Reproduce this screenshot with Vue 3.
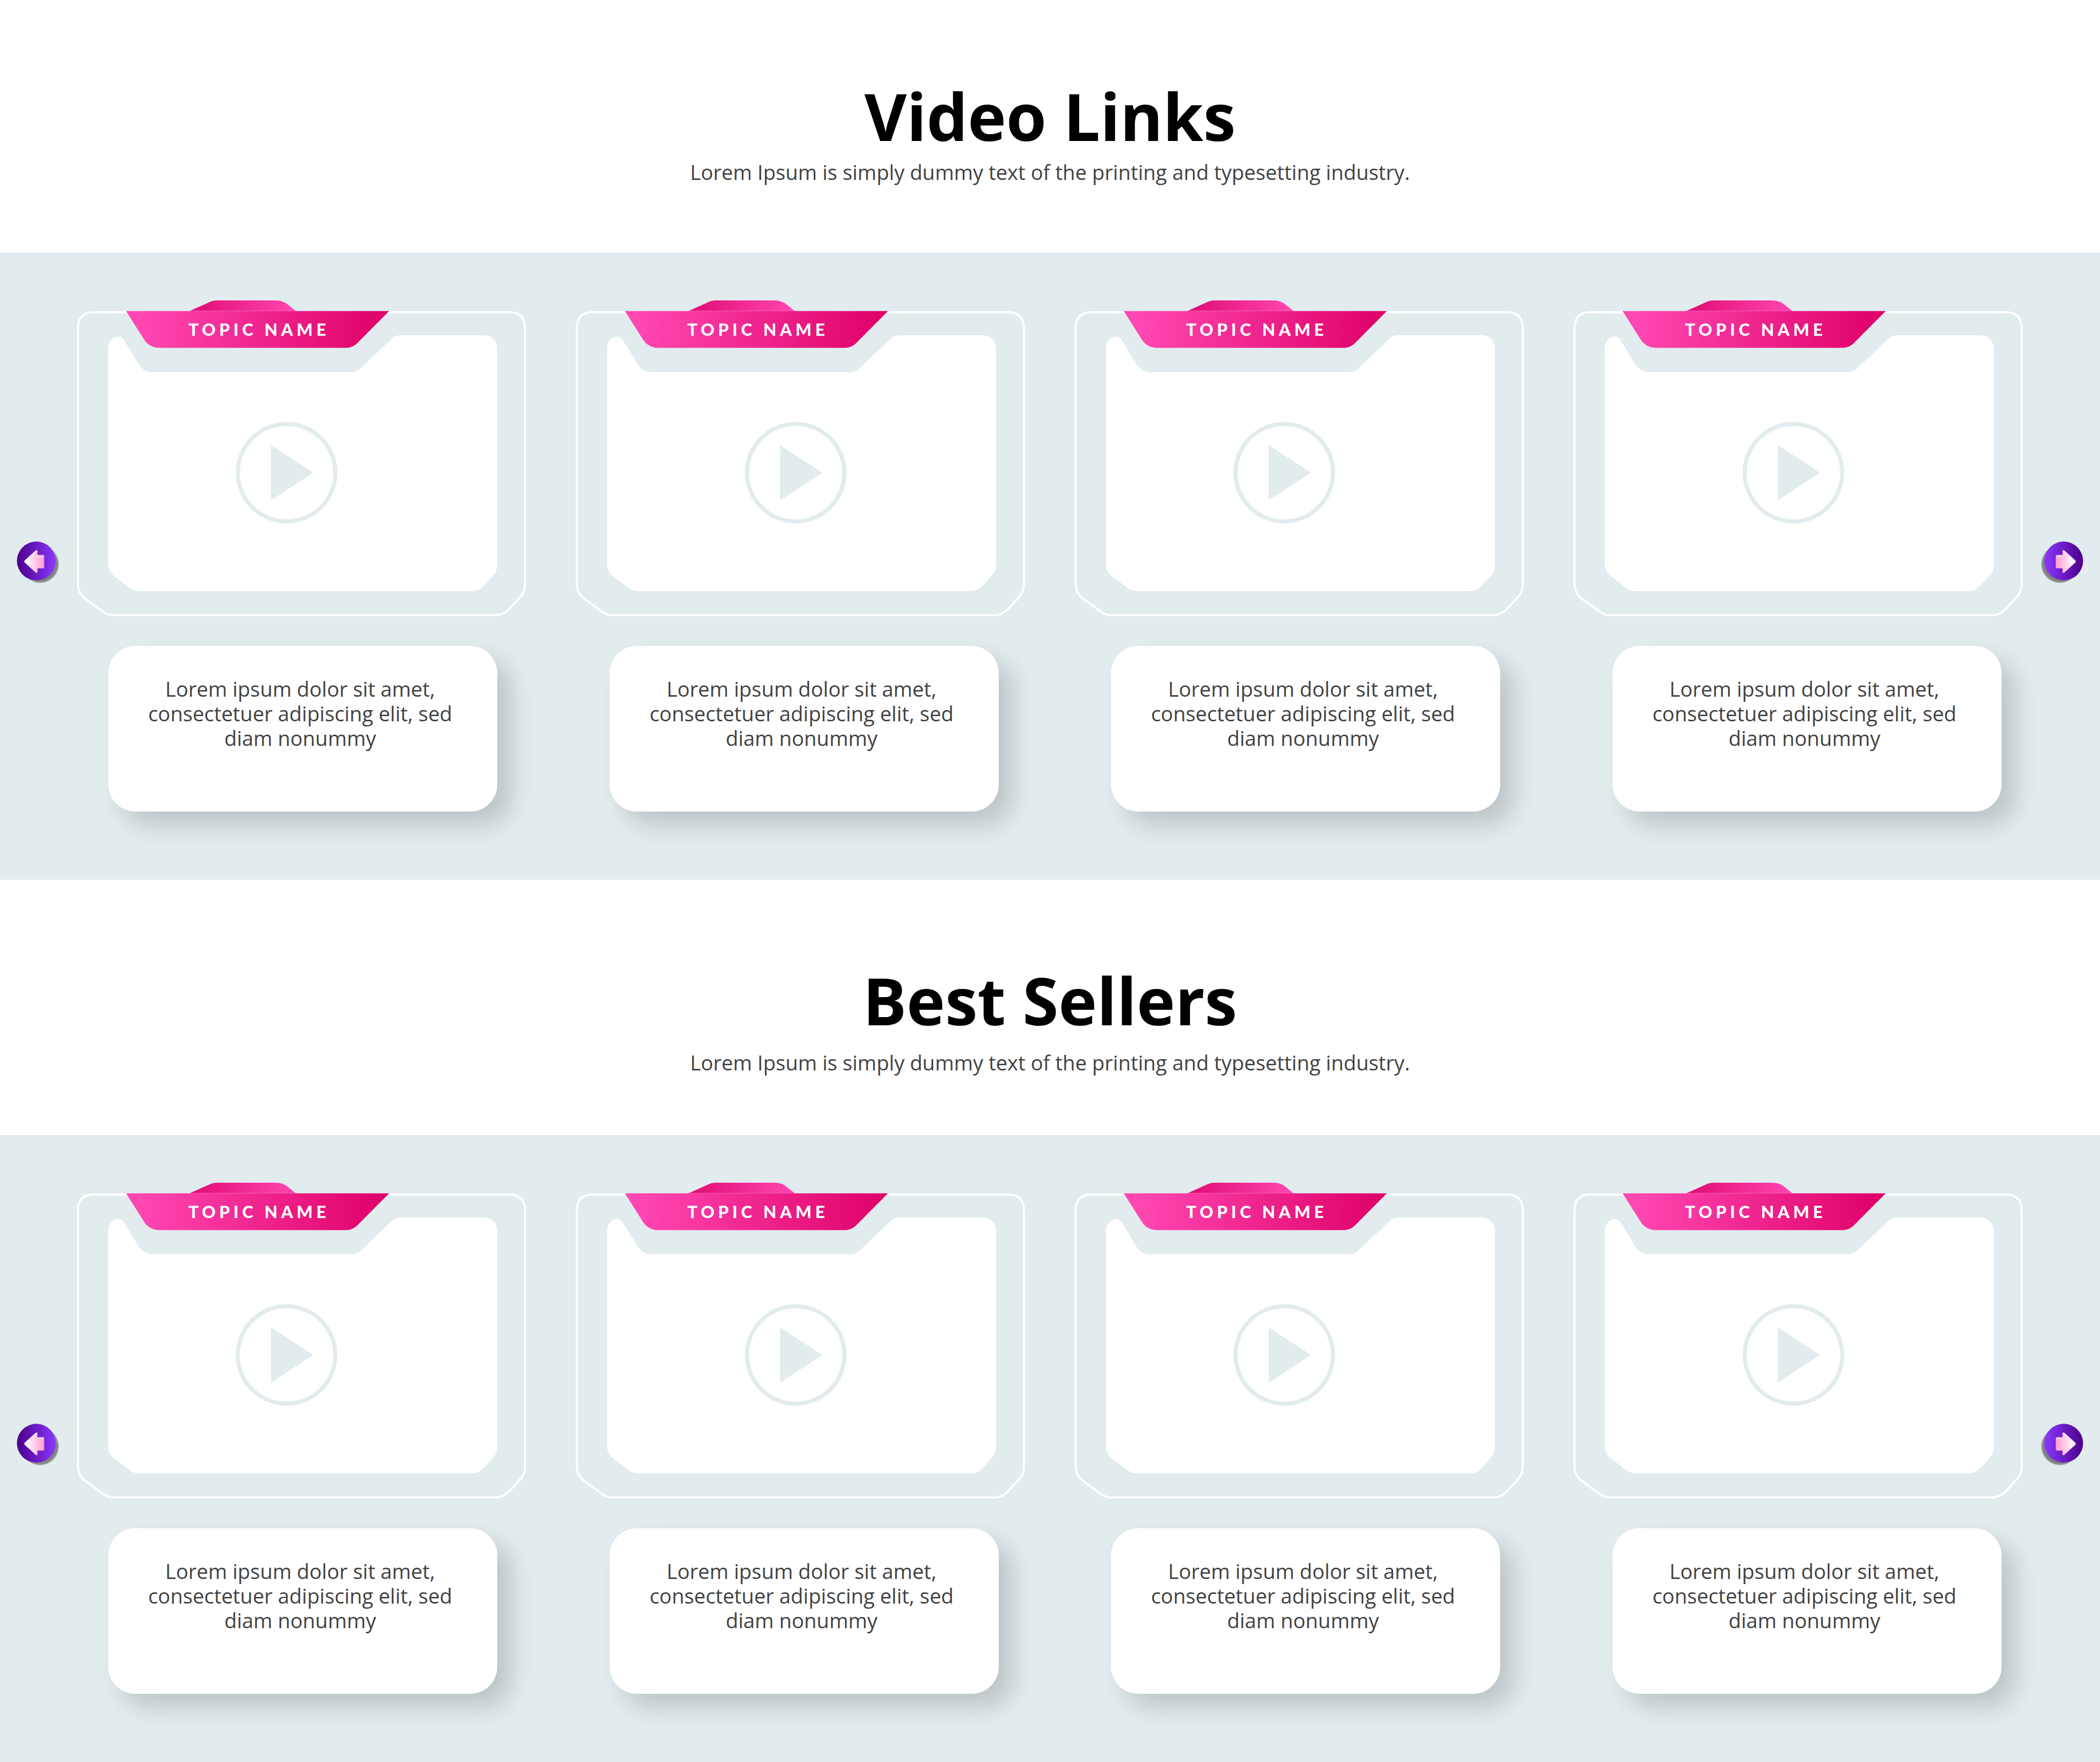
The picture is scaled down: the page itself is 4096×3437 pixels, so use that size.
<script setup>
const lorem = 'Lorem ipsum dolor sit amet, consectetuer adipiscing elit, sed diam nonummy'

const cards = [
  { topic: 'TOPIC NAME', text: lorem },
  { topic: 'TOPIC NAME', text: lorem },
  { topic: 'TOPIC NAME', text: lorem },
  { topic: 'TOPIC NAME', text: lorem },
]

const sections = [
  {
    id: 'video-links',
    title: 'Video Links',
    intro: 'Lorem Ipsum is simply dummy text of the printing and typesetting industry.',
    cards,
  },
  {
    id: 'best-sellers',
    title: 'Best Sellers',
    intro: 'Lorem Ipsum is simply dummy text of the printing and typesetting industry.',
    cards,
  },
]
</script>

<template>
  <main class="page">
    <svg class="defs" width="0" height="0" aria-hidden="true">
      <defs>
        <linearGradient id="tab-fill" x1="0" x2="1" y1="0" y2="0">
          <stop offset="0.05" stop-color="#ff47b2" />
          <stop offset="1" stop-color="#de0067" />
        </linearGradient>
        <linearGradient id="bump-fill" x1="0" x2="1" y1="0" y2="0">
          <stop offset="0.05" stop-color="#e20e76" />
          <stop offset="1" stop-color="#ff47b2" />
        </linearGradient>
        <linearGradient id="disc-fill" x1="0" x2="1" y1="0" y2="0">
          <stop offset="0" stop-color="#4c008a" />
          <stop offset="1" stop-color="#8a38ff" />
        </linearGradient>
        <linearGradient id="arrow-fill" x1="0" x2="1" y1="0" y2="0">
          <stop offset="0.05" stop-color="#ffffff" />
          <stop offset="1" stop-color="#ff9ccf" />
        </linearGradient>
        <radialGradient id="disc-shadow">
          <stop offset="0.88" stop-color="#808080" />
          <stop offset="0.96" stop-color="#9a9c9d" />
          <stop offset="1" stop-color="#c8cfd1" />
        </radialGradient>
        <symbol id="arrow-disc" viewBox="105 120 258 256">
          <circle cx="247" cy="259" r="116" fill="url(#disc-shadow)" />
          <circle cx="224" cy="239" r="119" fill="url(#disc-fill)" />
          <path
            d="M152 238 L220 176 Q230 170 231 180 V202 H267 Q272 202 272 208 V278 Q272 284 266 284 H231 V306 Q230 317 220 310 L152 248 Q148 243 152 238 Z"
            fill="url(#arrow-fill)" stroke="#d873d8" stroke-width="2" />
          <path d="M154 239 L221 179 Q227 175 228 181" fill="none" stroke="#fff" stroke-width="5" stroke-linecap="round" />
          <path d="M229 210 H262 Q266 210 266 214" fill="none" stroke="#e3dfe6" stroke-width="7" stroke-linecap="round" />
        </symbol>
      </defs>
    </svg>

    <section v-for="section in sections" :key="section.id" :class="section.id" :aria-labelledby="section.id">
      <header class="intro">
        <h2 :id="section.id" class="title">{{ section.title }}</h2>
        <p class="lead">{{ section.intro }}</p>
      </header>

      <div class="band">
        <button class="nav prev" type="button" aria-label="Previous">
          <svg class="nav-icon"><use href="#arrow-disc" /></svg>
        </button>

        <div class="frames">
          <article v-for="(card, i) in section.cards" :key="i" class="frame">
            <svg class="frame-art" viewBox="156 611 914 642" aria-hidden="true">
              <path
                d="M158 668 Q158 635 190 635 H1035 Q1067 635 1067 668 V1188 Q1067 1203 1058 1213 L1035 1238 Q1023 1251 1006 1251 H230 Q219 1251 210 1244 L174 1218 Q158 1206 158 1187 Z"
                fill="none" stroke="#fff" stroke-width="4.4" />
              <path
                d="M219.5 709 C219.5 696 229 684.7 239.5 684.7 C245 684.7 249 687 251.4 691 L280.5 739 C287 750 296 756.7 310 756.7 H714 C723 756.7 730 753 736 746 L795 690 C800 685 806 682 814 682 H983 C999 682 1010.3 693 1010.3 710 V1148 C1010.3 1157 1008 1164 1002 1170.5 L983.5 1190.5 C977 1198 969 1202 959 1202 H283 C276 1202 269 1200 263.5 1195.5 L233 1172.5 C224 1166 219.5 1157 219.5 1145 Z"
                fill="#fff" />
              <path
                d="M384.5 633 L424.6 615 C430 612 435 611 441.6 611 H559.5 C570 611 579 614 586 620.5 L601.4 633 Z"
                fill="url(#bump-fill)" />
              <path
                d="M256 632.7 H790.7 L727 696.7 C720 704 712 707.4 703 707.4 H323 C309 707.4 298 700 291.6 689 Z"
                fill="url(#tab-fill)" />
              <path d="M386 632.3 H601" stroke="#f368b4" stroke-width="1" />
            </svg>
            <h3 class="topic">{{ card.topic }}</h3>
            <button class="play" type="button" :aria-label="`Play ${card.topic}`">
              <svg class="play-icon" viewBox="0 0 207 207">
                <circle cx="103.5" cy="103.5" r="99.4" fill="none" stroke="#e2ebee" stroke-width="8.3" />
                <path d="M71.7 47.4 L158 103.5 L71.7 160 Z" fill="#e2ebee" />
              </svg>
            </button>
          </article>
        </div>

        <div class="captions">
          <p v-for="(card, i) in section.cards" :key="i" class="caption">{{ card.text }}</p>
        </div>

        <button class="nav next" type="button" aria-label="Next">
          <svg class="nav-icon"><use href="#arrow-disc" /></svg>
        </button>
      </div>
    </section>
  </main>
</template>

<style>
body {
  margin: 0;
  background: #e2ebee;
}
</style>

<style scoped>
.page {
  font-family: "Open Sans", "Noto Sans", sans-serif;
  color: #424242;
}

.defs {
  position: absolute;
}

.intro {
  display: flex;
  flex-direction: column;
  align-items: center;
  gap: 14px;
  box-sizing: border-box;
  min-height: 493px;
  padding: 154px 32px 0;
  background: #fff;
  text-align: center;
}

.best-sellers .intro {
  gap: 26px;
  min-height: 498px;
  padding-top: 163px;
}

.title {
  margin: 0;
  color: #000;
  font-size: 127px;
  font-weight: 700;
  line-height: 144px;
}

.lead {
  margin: 0;
  font-size: 40px;
  line-height: 48px;
}

.band {
  display: grid;
  grid-template-columns: 150px minmax(0, 1fr) 150px;
  row-gap: 58px;
  padding: 93px 0 133px;
  background: #e2ebee;
}

.nav {
  grid-row: 1 / span 2;
  align-self: start;
  width: 82px;
  height: 82px;
  margin: 470px 33px 0;
  padding: 0;
  border: 0;
  background: none;
  cursor: pointer;
}

.prev {
  grid-column: 1;
}

.next {
  grid-column: 3;
  justify-self: end;
  transform: scaleX(-1);
}

.nav-icon,
.play-icon {
  display: block;
  width: 100%;
  height: 100%;
}

.frames {
  grid-area: 1 / 2;
  display: grid;
  grid-template-columns: repeat(4, minmax(0, 1fr));
  gap: 96px;
}

.frame {
  position: relative;
}

.frame-art {
  display: block;
  width: 100%;
}

.topic {
  position: absolute;
  top: 20px;
  left: 11%;
  width: 59%;
  margin: 0;
  color: #fff;
  font-family: Lato, "Open Sans", sans-serif;
  font-size: 33px;
  font-weight: 900;
  letter-spacing: 7px;
  line-height: 72px;
  text-align: center;
}

.play {
  position: absolute;
  top: 237px;
  left: 310px;
  width: 198px;
  height: 198px;
  padding: 0;
  border: 0;
  background: none;
  cursor: pointer;
}

.frame:nth-child(even) .play {
  left: 330px;
}

.captions {
  grid-area: 2 / 2;
  display: grid;
  grid-template-columns: repeat(4, minmax(0, 1fr));
  gap: 219px;
  padding: 0 42px 0 61px;
}

.caption {
  box-sizing: border-box;
  min-height: 323px;
  margin: 0;
  padding: 60px 66px 60px 56px;
  border-radius: 53px;
  background: #fff;
  box-shadow: 27px 27px 46px rgba(0, 0, 0, 0.16);
  font-size: 40px;
  line-height: 48px;
  text-align: center;
}
</style>
